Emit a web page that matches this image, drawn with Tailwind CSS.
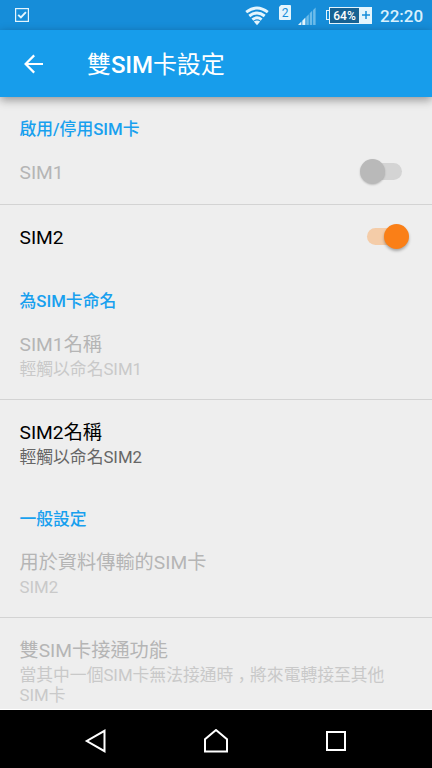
<!DOCTYPE html>
<html lang="zh-TW">
  <head>
    <meta charset="utf-8">
    <title>雙SIM卡設定</title>
    <meta name="viewport" content="width=device-width, initial-scale=1">
    <script src="https://cdn.jsdelivr.net/npm/@tailwindcss/browser@4"></script>
  </head>
  <body class="h-screen overflow-hidden flex flex-col bg-[#eeeeee] font-[Roboto,'Noto_Sans_CJK_TC',sans-serif]">
    <!-- Status bar -->
    <div class="h-[30px] shrink-0 flex items-center bg-[#168dd9] text-white">
      <svg class="ml-[15px]" width="14" height="14" viewBox="0 0 14 14" fill="none" stroke="#e4f5fd">
        <rect x="0.6" y="0.6" width="12.8" height="12.8" stroke-width="1.2"/>
        <path d="M3.2 6.8l2.7 2.7 5-5.3" stroke-width="1.9"/>
      </svg>
      <svg class="ml-auto mt-[2px]" width="24" height="20" viewBox="0 0 24 20" fill="none" stroke="#e4f5fd" stroke-width="2.9">
        <path d="M1.2 6.2Q12 -2.2 22.8 6.2"/>
        <path d="M4.3 10Q12 3.8 19.7 10"/>
        <path d="M7.4 13.7Q12 10 16.6 13.7"/>
        <path d="M8.8 15.6Q12 13.2 15.2 15.6L12 19.2z" fill="#e4f5fd" stroke="none"/>
      </svg>
      <div class="ml-[10px] mb-[5px] w-[12px] h-[15px] rounded-[1px] bg-[#e4f5fd] text-[#168dd9] text-[12px] leading-[16px] text-center [clip-path:polygon(2px_0,100%_0,100%_100%,0_100%,0_2px)]">2</div>
      <svg class="ml-[7px] mt-[2px]" width="18" height="18" viewBox="0 0 18 18">
        <path d="M0 18L3.4 14.6V18z M4.3 13.7L7.4 10.6V18H4.3z" fill="#e4f5fd"/>
        <path d="M8.3 9.7L10.8 7.2V18H8.3z M11.7 6.3L14.2 3.8V18H11.7z M15.1 2.9L17.6 0.4V18H15.1z" fill="#6dbcea"/>
      </svg>
      <div class="ml-[10px] flex items-center">
        <div class="w-[3px] h-[10px] border border-r-0 border-[#e4f5fd]"></div>
        <div class="w-[31px] h-[17px] border border-[#e4f5fd] bg-[#176293] text-[12px] leading-[16px] font-medium text-center">64%</div>
        <div class="w-[12px] h-[17px] bg-[#e4f5fd] flex items-center justify-center">
          <svg width="8" height="8" viewBox="0 0 8 8" stroke="#168dd9" stroke-width="1.5"><path d="M4 0v8M0 4h8"/></svg>
        </div>
      </div>
      <div class="ml-[8px] mr-[9px] w-[43px] whitespace-nowrap text-[17px] leading-[30px] pt-px font-medium text-[#d8f1fd]">22:20</div>
    </div>

    <!-- App bar -->
    <div class="relative z-10 h-[67px] shrink-0 flex items-center bg-[#179deb] text-white shadow-[0_3px_9px_rgba(0,0,0,0.38)]">
      <svg class="ml-[24px]" width="20" height="20" viewBox="0 0 20 20" fill="none" stroke="white" stroke-width="2.2">
        <path d="M19 10H2M10.2 1.4L1.6 10l8.6 8.6"/>
      </svg>
      <h1 class="ml-[43px] pt-[2px] text-[24px] leading-[32px] tracking-[-0.1px]">雙<span class="font-medium">SIM</span>卡設定</h1>
    </div>

    <!-- Settings list -->
    <div class="flex-1 min-h-0 overflow-hidden border-b border-white text-[#b5b5b5]">
      <h2 class="h-[43px] pt-5 px-[19.5px] text-[16.8px] leading-6 font-medium text-[#18a0ee]">啟用/停用SIM卡</h2>
      <div class="h-[65px] px-[19.5px] flex items-center border-b border-[#d3d3d3] text-[19.2px]">
        <span class="pt-0.5">SIM1</span>
        <div class="ml-auto mr-[10.5px] mb-px w-[42px] h-[25px] flex items-center">
          <div class="w-[25px] h-[25px] rounded-full bg-[#b9b9b9] shadow-[0_1px_2px_rgba(0,0,0,0.2)] z-10"></div>
          <div class="-ml-[18px] w-[35px] h-[17px] rounded-full bg-[#d4d4d4]"></div>
        </div>
      </div>
      <div class="h-[64px] px-[19.5px] flex items-center text-[19.2px] text-black">
        <span class="pt-0.5">SIM2</span>
        <div class="ml-auto mr-[3.5px] mb-px w-[42px] h-[25px] flex items-center">
          <div class="w-[35px] h-[17px] shrink-0 rounded-full bg-[#f4cca8]"></div>
          <div class="-ml-[18px] w-[25px] h-[25px] shrink-0 rounded-full bg-[#fa7f17] shadow-[0_2px_3px_rgba(0,0,0,0.3)]"></div>
        </div>
      </div>

      <h2 class="h-[43px] pt-5 px-[19.5px] text-[16.8px] leading-6 font-medium text-[#18a0ee]">為SIM卡命名</h2>
      <div class="h-[88px] px-[19.5px] pt-5 border-b border-[#d3d3d3]">
        <p class="text-[19.2px] leading-[26px]">SIM1名稱</p>
        <p class="mt-px text-[16.8px] leading-5 text-[#c9c9c9]">輕觸以命名SIM1</p>
      </div>
      <div class="h-[87px] px-[19.5px] pt-5">
        <p class="text-[19.2px] leading-[26px] text-black">SIM2名稱</p>
        <p class="mt-px text-[16.8px] leading-5 text-[#666666]">輕觸以命名SIM2</p>
      </div>

      <h2 class="h-[43px] pt-5 px-[19.5px] text-[16.8px] leading-6 font-medium text-[#18a0ee]">一般設定</h2>
      <div class="h-[88px] px-[19.5px] pt-5 border-b border-[#d3d3d3]">
        <p class="text-[19.2px] leading-[26px]">用於資料傳輸的SIM卡</p>
        <p class="mt-px text-[16.8px] leading-5 text-[#c9c9c9]">SIM2</p>
      </div>
      <div class="px-[19.5px] pt-5">
        <p class="text-[19.2px] leading-[26px]">雙SIM卡接通功能</p>
        <p class="mt-0.5 text-[16.8px] leading-[19.5px] text-[#c9c9c9]">當其中一個SIM卡無法接通時<span class="relative top-[5px]">，</span>將來電轉接至其他<br>SIM卡</p>
      </div>
    </div>

    <!-- Navigation bar -->
    <div class="h-[58px] shrink-0 flex items-center justify-between bg-black pl-[84px] pr-[86px] pt-1">
      <svg width="22" height="24" viewBox="0 0 22 24" fill="none" stroke="white" stroke-width="2">
        <path d="M20.5 1.8v20.4L2.8 12z"/>
      </svg>
      <svg width="24" height="24" viewBox="0 0 24 24" fill="none" stroke="white" stroke-width="2">
        <path d="M1 22.5V10.2L12 1l11 9.2v12.3z"/>
      </svg>
      <svg width="20" height="20" viewBox="0 0 20 20" fill="none" stroke="white" stroke-width="2">
        <rect x="1" y="1" width="18" height="18"/>
      </svg>
    </div>
  </body>
</html>
